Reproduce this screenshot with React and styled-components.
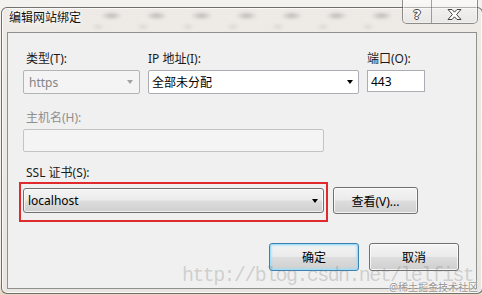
import React from 'react';
import styled, { createGlobalStyle } from 'styled-components';

const GlobalStyle = createGlobalStyle`
  html, body { margin: 0; padding: 0; }
  body {
    width: 482px;
    height: 295px;
    overflow: hidden;
    background: linear-gradient(180deg, #f4f2ef 0%, #f1efec 94%, #e9d6bf 100%);
    font-family: "Noto Sans", "Noto Sans CJK SC", sans-serif;
  }
`;

const Stage = styled.div`
  position: relative;
  width: 482px;
  height: 295px;
  overflow: hidden;
  box-sizing: border-box;
  padding: 7px 0 0 1px;
`;

const Window = styled.div`
  position: relative;
  width: 482px;
  box-sizing: border-box;
  padding: 0 5px 4px 5px;
  border: 1px solid rgba(70, 70, 70, 0.75);
  border-radius: 6px;
  background: linear-gradient(180deg, #eeebe7 0%, #e9e6e1 100%);
  box-shadow: inset 0 0 0 1px rgba(255, 255, 255, 0.75);
`;

const TitleBar = styled.div`
  display: flex;
  align-items: flex-start;
  height: 24px;
  padding-top: 2px;
  box-sizing: border-box;
`;

const Title = styled.div`
  padding-left: 2px;
  font-size: 12px;
  line-height: 16px;
  color: #111;
  text-shadow: 0 0 6px #fff, 0 0 3px #fff;
  white-space: nowrap;
`;

// blurred desktop showing through the glass frame
const Smudges = styled.div`
  flex: 1;
  height: 22px;
  margin: -2px 80px 0 8px;
  background:
    radial-gradient(ellipse 11px 4px at 50% 35%, rgba(90, 90, 90, 0.38), transparent),
    radial-gradient(ellipse 6px 3px at 20% 85%, rgba(110, 110, 110, 0.2), transparent);
  background-size: 45px 22px;
  background-repeat: repeat-x;
  filter: blur(1.5px);
`;

const CaptionGroup = styled.div`
  position: absolute;
  top: -9px;
  right: 4px;
  display: flex;
  height: 24px;
  border: 1px solid rgba(60, 60, 60, 0.55);
  border-top: none;
  border-radius: 0 0 5px 5px;
  overflow: hidden;
  box-shadow: inset 0 0 0 1px rgba(255, 255, 255, 0.6);
`;

const CaptionButton = styled.div`
  width: ${(p) => p.$w}px;
  display: flex;
  align-items: center;
  justify-content: center;
  padding-top: 6px;
  box-sizing: border-box;
  background: linear-gradient(180deg, rgba(255, 255, 255, 0.55), rgba(225, 225, 225, 0.35));
  & + & { border-left: 1px solid rgba(60, 60, 60, 0.45); }
`;

const HelpGlyph = styled.span`
  font-family: "DejaVu Sans", sans-serif;
  font-weight: bold;
  font-size: 13px;
  line-height: 13px;
  color: #fff;
  text-shadow: -1px 0 #444, 1px 0 #444, 0 -1px #444, 0 1px #444;
`;

const Client = styled.div`
  width: 470px;
  height: 257px;
  box-sizing: border-box;
  border: 1px solid #8f9090;
  background: #f0f0f0;
  padding: 18px 17px 17px 15px;
  display: flex;
  flex-direction: column;
`;

const TopGrid = styled.div`
  display: grid;
  grid-template-columns: 117px 211px 58px;
  column-gap: 8px;
  align-items: start;
`;

const Label = styled.div`
  font-size: 12px;
  line-height: 16px;
  color: ${(p) => (p.$disabled ? '#8f8f8f' : '#1a1a1a')};
  padding-left: ${(p) => p.$indent || 0}px;
  margin-top: ${(p) => p.$top || 0}px;
  margin-bottom: ${(p) => (p.$bottom === undefined ? 3 : p.$bottom)}px;
  white-space: nowrap;
`;

const Combo = styled.div`
  height: 24px;
  box-sizing: border-box;
  display: flex;
  align-items: center;
  justify-content: space-between;
  padding: 0 5px 0 ${(p) => p.$pad}px;
  border: 1px solid ${(p) => (p.$disabled ? '#b2b5b8' : '#abadb3')};
  border-radius: 2px;
  background: ${(p) => (p.$disabled ? '#f4f4f4' : '#ffffff')};
  color: ${(p) => (p.$disabled ? '#848484' : '#000')};
  font-size: 12px;
`;

const Arrow = styled.span`
  width: 0;
  height: 0;
  border-left: 3.5px solid transparent;
  border-right: 3.5px solid transparent;
  border-top: 4px solid ${(p) => p.$color || '#000'};
  margin-right: ${(p) => p.$mr || 0}px;
`;

const TextBox = styled.div`
  height: ${(p) => p.$h}px;
  width: ${(p) => (p.$w ? `${p.$w}px` : 'auto')};
  box-sizing: border-box;
  display: flex;
  align-items: center;
  padding-left: 3px;
  border: 1px solid ${(p) => (p.$disabled ? '#c2c4c6' : '#abadb3')};
  border-radius: ${(p) => (p.$disabled ? 2 : 0)}px;
  background: ${(p) => (p.$disabled ? '#f4f4f4' : '#fff')};
  font-size: 12px;
  color: #000;
`;

const SslRow = styled.div`
  display: flex;
  align-items: flex-start;
`;

const Highlight = styled.div`
  margin-left: -4px;
  padding: 4px 2px 7px 2px;
  border: 2px solid #e02a2e;
`;

const winButtonBg = 'linear-gradient(180deg, #f4f4f4 0%, #ebebeb 48%, #dddddd 52%, #cfcfcf 100%)';

const DropButton = styled.div`
  width: 301px;
  height: 25px;
  box-sizing: border-box;
  display: flex;
  align-items: center;
  justify-content: space-between;
  padding: 0 5px 0 4px;
  border: 1px solid #707070;
  border-radius: 3px;
  background: ${winButtonBg};
  box-shadow: inset 0 0 0 1px rgba(255, 255, 255, 0.7);
  font-size: 12px;
  color: #000;
`;

const Button = styled.div`
  width: ${(p) => p.$w}px;
  height: ${(p) => p.$h}px;
  margin: ${(p) => p.$margin || 0};
  box-sizing: border-box;
  display: flex;
  align-items: center;
  justify-content: center;
  border: 1px solid ${(p) => (p.$default ? '#3c7fb1' : '#707070')};
  border-radius: 3px;
  background: ${winButtonBg};
  box-shadow: ${(p) =>
    p.$default
      ? 'inset 0 0 0 1px #9fdcf6, inset 0 0 2px 2px rgba(160, 220, 246, 0.55)'
      : 'inset 0 0 0 1px rgba(255, 255, 255, 0.75)'};
  font-size: 12px;
  color: #000;
`;

const ButtonRow = styled.div`
  margin-top: auto;
  display: flex;
  justify-content: flex-end;
  gap: 10px;
`;

const Watermark = styled.div`
  position: absolute;
  left: 182px;
  top: 266px;
  font-family: "Liberation Mono", monospace;
  font-size: 20px;
  line-height: 20px;
  letter-spacing: -1.6px;
  color: rgba(125, 125, 125, 0.3);
  white-space: nowrap;
  pointer-events: none;
`;

const Credit = styled.div`
  position: absolute;
  left: 389px;
  top: 281px;
  font-size: 10px;
  line-height: 12px;
  color: rgba(110, 110, 110, 0.75);
  text-shadow: 0 0 2px #fff, 0 0 1px #fff;
  white-space: nowrap;
  pointer-events: none;
`;

const CloseGlyph = () => (
  <svg width="15" height="11" viewBox="0 0 15 11">
    <polygon
      points="1,0.5 5,0.5 7.5,3.2 10,0.5 14,0.5 9.6,5.5 14,10.5 10,10.5 7.5,7.8 5,10.5 1,10.5 5.4,5.5"
      fill="#fff"
      stroke="#444"
      strokeWidth="1"
      strokeLinejoin="round"
    />
  </svg>
);

export default function App() {
  return (
    <>
      <GlobalStyle />
      <Stage>
        <Window>
          <TitleBar>
            <Title>编辑网站绑定</Title>
            <Smudges />
          </TitleBar>
          <CaptionGroup>
            <CaptionButton $w={28}>
              <HelpGlyph>?</HelpGlyph>
            </CaptionButton>
            <CaptionButton $w={46}>
              <CloseGlyph />
            </CaptionButton>
          </CaptionGroup>

          <Client>
            <TopGrid>
              <div>
                <Label $indent={3}>类型(T):</Label>
                <Combo $disabled $pad={5}>
                  <span>https</span>
                  <Arrow $color="#a2a2a2" $mr={1} />
                </Combo>
              </div>
              <div>
                <Label>IP 地址(I):</Label>
                <Combo $pad={3}>
                  <span>全部未分配</span>
                  <Arrow />
                </Combo>
              </div>
              <div>
                <Label>端口(O):</Label>
                <TextBox $h={22}>443</TextBox>
              </div>
            </TopGrid>

            <Label $disabled $indent={3} $top={16}>主机名(H):</Label>
            <TextBox $disabled $h={23} $w={301} />

            <Label $indent={3} $top={13} $bottom={1}>SSL 证书(S):</Label>
            <SslRow>
              <Highlight>
                <DropButton>
                  <span>localhost</span>
                  <Arrow />
                </DropButton>
              </Highlight>
              <Button $w={85} $h={27} $margin="5px 0 0 5px">查看(V)...</Button>
            </SslRow>

            <ButtonRow>
              <Button $w={90} $h={28} $default>确定</Button>
              <Button $w={90} $h={28}>取消</Button>
            </ButtonRow>
          </Client>
        </Window>
        <Watermark>http://blog.csdn.net/lelfist</Watermark>
        <Credit>@稀土掘金技术社区</Credit>
      </Stage>
    </>
  );
}
